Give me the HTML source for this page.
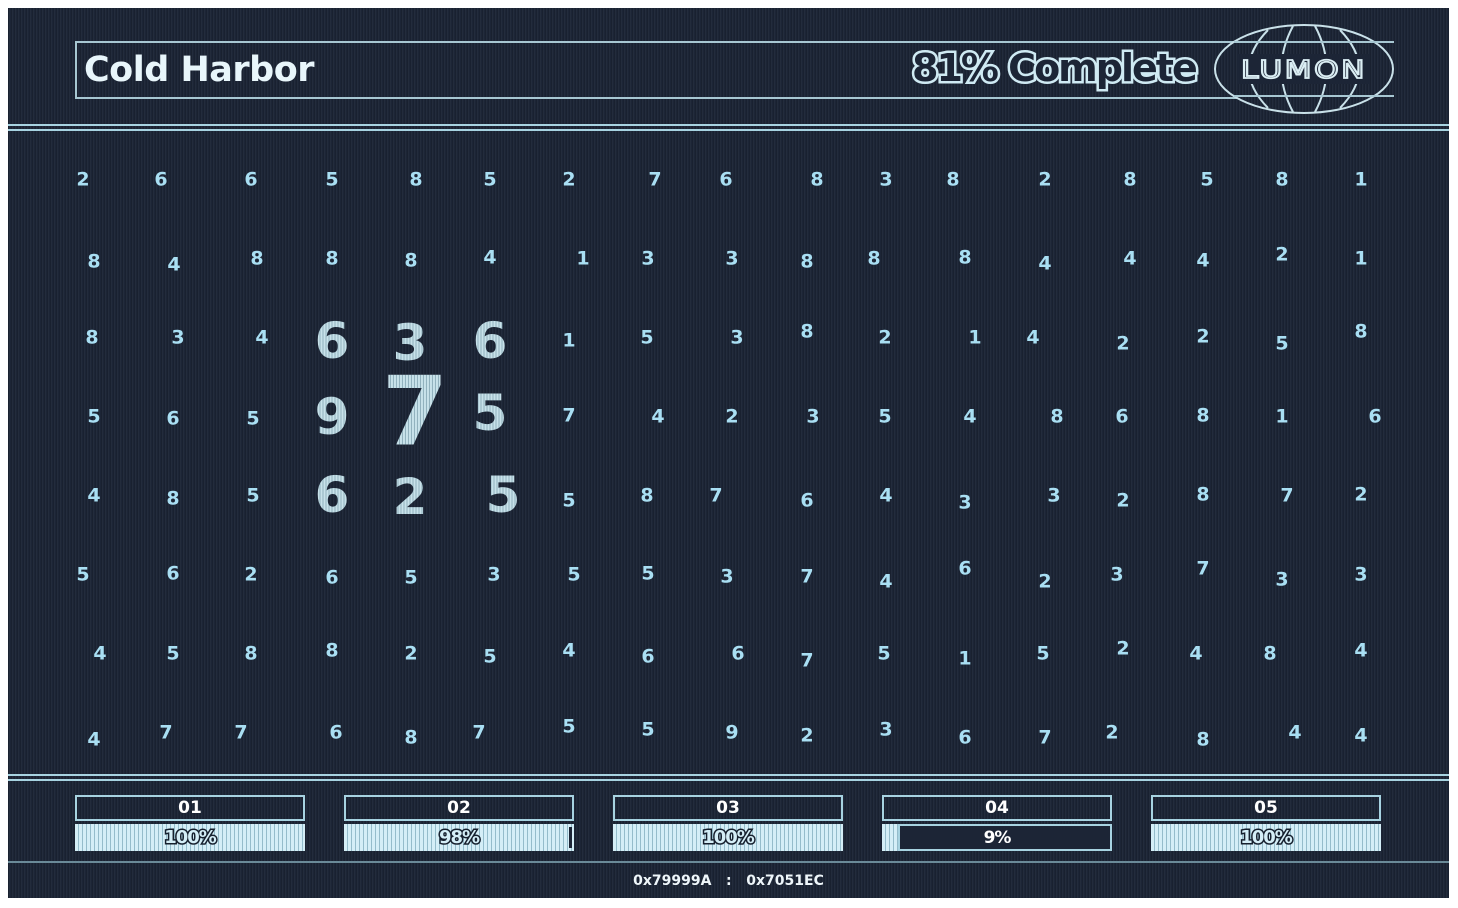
<!DOCTYPE html>
<html><head><meta charset="utf-8"><style>
html,body{margin:0;padding:0;background:#fff;width:1458px;height:908px;overflow:hidden}
#f{position:absolute;left:8px;top:8px;width:1441px;height:890px;background:#1c2536;
background-image:repeating-linear-gradient(90deg,rgba(0,0,0,0.12) 0 1px,rgba(255,255,255,0.03) 1px 2px,transparent 2px 3px);overflow:hidden}
.a{position:absolute}
.n{position:absolute;transform:translate(-50%,-50%);font:bold 19px "DejaVu Sans","Liberation Sans",sans-serif;color:#a9dff3;line-height:1}
.b{position:absolute;transform:translate(-50%,-50%);font:bold 50px "DejaVu Sans","Liberation Sans",sans-serif;color:#bcd9e2;line-height:1;
background:repeating-linear-gradient(90deg,#c8e2ea 0 2px,#8fb0bc 2px 3px);-webkit-background-clip:text;background-clip:text;-webkit-text-fill-color:transparent}
.hl{position:absolute;left:0;width:1441px;height:2px;background:#a7d3e1}
.lab{position:absolute;height:22px;border:2px solid #a7d3e1;text-align:center;font:bold 17px "DejaVu Sans","Liberation Sans",sans-serif;color:#fff;line-height:22px}
.bar{position:absolute;height:27px;background:repeating-linear-gradient(90deg,#d4eef7 0 3px,#94bccb 3px 4px);text-align:center;font:bold 18px "DejaVu Sans","Liberation Sans",sans-serif;line-height:27px;color:#d4eef7;-webkit-text-stroke:3px #16202e;paint-order:stroke fill;letter-spacing:-1px}
</style></head><body><div id="f">
<div class="a" style="left:67px;top:33px;width:1160px;height:54px;border:2px solid #a7c7d2;border-right:none"></div>
<div class="a" style="left:76px;top:42px;font:bold 35px 'DejaVu Sans','Liberation Sans',sans-serif;color:#e8f6fb;letter-spacing:-0.5px">Cold Harbor</div>
<div class="a" style="left:904px;top:38px;font:bold 38px 'DejaVu Sans','Liberation Sans',sans-serif;color:#1c2536;-webkit-text-stroke:5px #cfeaf3;paint-order:stroke fill;letter-spacing:-2px">81% Complete</div>
<svg class="a" style="left:0;top:0" width="1441" height="130">
<g fill="none" stroke="#c9e1e9" stroke-width="2">
<ellipse cx="1296" cy="61" rx="89" ry="44"/>
<path d="M1260 22 Q1222 61 1260 100"/><path d="M1332 22 Q1370 61 1332 100"/>
<path d="M1285 18 Q1262 61 1285 104"/><path d="M1307 18 Q1330 61 1307 104"/>
</g>
<rect x="1226" y="33" width="160" height="2" fill="#a7c7d2"/>
<rect x="1226" y="87" width="160" height="2" fill="#a7c7d2"/>
<rect x="1230" y="46" width="132" height="30" fill="#1c2536"/>
<text x="1296" y="70" text-anchor="middle" font-family="DejaVu Sans,Liberation Sans,sans-serif" font-size="25" fill="#1c2536" stroke="#dbeef4" stroke-width="1.8" letter-spacing="2" textLength="126" lengthAdjust="spacingAndGlyphs">LUMON</text>
</svg>
<div class="hl" style="top:116px"></div><div class="hl" style="top:121px"></div>
<div id="g" class="a" style="left:-8px;top:-8px;width:1458px;height:908px">
<span class="n" style="left:83px;top:180px">2</span><span class="n" style="left:161px;top:180px">6</span><span class="n" style="left:251px;top:180px">6</span><span class="n" style="left:332px;top:180px">5</span><span class="n" style="left:416px;top:180px">8</span><span class="n" style="left:490px;top:180px">5</span><span class="n" style="left:569px;top:180px">2</span><span class="n" style="left:655px;top:180px">7</span><span class="n" style="left:726px;top:180px">6</span><span class="n" style="left:817px;top:180px">8</span><span class="n" style="left:886px;top:180px">3</span><span class="n" style="left:953px;top:180px">8</span><span class="n" style="left:1045px;top:180px">2</span><span class="n" style="left:1130px;top:180px">8</span><span class="n" style="left:1207px;top:180px">5</span><span class="n" style="left:1282px;top:180px">8</span><span class="n" style="left:1361px;top:180px">1</span>
<span class="n" style="left:94px;top:262px">8</span><span class="n" style="left:174px;top:265px">4</span><span class="n" style="left:257px;top:259px">8</span><span class="n" style="left:332px;top:259px">8</span><span class="n" style="left:411px;top:261px">8</span><span class="n" style="left:490px;top:258px">4</span><span class="n" style="left:583px;top:259px">1</span><span class="n" style="left:648px;top:259px">3</span><span class="n" style="left:732px;top:259px">3</span><span class="n" style="left:807px;top:262px">8</span><span class="n" style="left:874px;top:259px">8</span><span class="n" style="left:965px;top:258px">8</span><span class="n" style="left:1045px;top:264px">4</span><span class="n" style="left:1130px;top:259px">4</span><span class="n" style="left:1203px;top:261px">4</span><span class="n" style="left:1282px;top:255px">2</span><span class="n" style="left:1361px;top:259px">1</span>
<span class="n" style="left:92px;top:338px">8</span><span class="n" style="left:178px;top:338px">3</span><span class="n" style="left:262px;top:338px">4</span><span class="b" style="left:332px;top:341px">6</span><span class="b" style="left:410px;top:343px">3</span><span class="b" style="left:490px;top:341px">6</span><span class="n" style="left:569px;top:341px">1</span><span class="n" style="left:647px;top:338px">5</span><span class="n" style="left:737px;top:338px">3</span><span class="n" style="left:807px;top:332px">8</span><span class="n" style="left:885px;top:338px">2</span><span class="n" style="left:975px;top:338px">1</span><span class="n" style="left:1033px;top:338px">4</span><span class="n" style="left:1123px;top:344px">2</span><span class="n" style="left:1203px;top:337px">2</span><span class="n" style="left:1282px;top:344px">5</span><span class="n" style="left:1361px;top:332px">8</span>
<span class="n" style="left:94px;top:417px">5</span><span class="n" style="left:173px;top:419px">6</span><span class="n" style="left:253px;top:419px">5</span><span class="b" style="left:332px;top:417px">9</span><span class="b" style="left:415px;top:413px;font-size:95px">7</span><span class="b" style="left:490px;top:413px">5</span><span class="n" style="left:569px;top:416px">7</span><span class="n" style="left:658px;top:417px">4</span><span class="n" style="left:732px;top:417px">2</span><span class="n" style="left:813px;top:417px">3</span><span class="n" style="left:885px;top:417px">5</span><span class="n" style="left:970px;top:417px">4</span><span class="n" style="left:1057px;top:417px">8</span><span class="n" style="left:1122px;top:417px">6</span><span class="n" style="left:1203px;top:416px">8</span><span class="n" style="left:1282px;top:417px">1</span><span class="n" style="left:1375px;top:417px">6</span>
<span class="n" style="left:94px;top:496px">4</span><span class="n" style="left:173px;top:499px">8</span><span class="n" style="left:253px;top:496px">5</span><span class="b" style="left:332px;top:495px">6</span><span class="b" style="left:410px;top:497px">2</span><span class="b" style="left:503px;top:495px">5</span><span class="n" style="left:569px;top:501px">5</span><span class="n" style="left:647px;top:496px">8</span><span class="n" style="left:716px;top:496px">7</span><span class="n" style="left:807px;top:501px">6</span><span class="n" style="left:886px;top:496px">4</span><span class="n" style="left:965px;top:503px">3</span><span class="n" style="left:1054px;top:496px">3</span><span class="n" style="left:1123px;top:501px">2</span><span class="n" style="left:1203px;top:495px">8</span><span class="n" style="left:1287px;top:496px">7</span><span class="n" style="left:1361px;top:495px">2</span>
<span class="n" style="left:83px;top:575px">5</span><span class="n" style="left:173px;top:574px">6</span><span class="n" style="left:251px;top:575px">2</span><span class="n" style="left:332px;top:578px">6</span><span class="n" style="left:411px;top:578px">5</span><span class="n" style="left:494px;top:575px">3</span><span class="n" style="left:574px;top:575px">5</span><span class="n" style="left:648px;top:574px">5</span><span class="n" style="left:727px;top:577px">3</span><span class="n" style="left:807px;top:577px">7</span><span class="n" style="left:886px;top:582px">4</span><span class="n" style="left:965px;top:569px">6</span><span class="n" style="left:1045px;top:582px">2</span><span class="n" style="left:1117px;top:575px">3</span><span class="n" style="left:1203px;top:569px">7</span><span class="n" style="left:1282px;top:580px">3</span><span class="n" style="left:1361px;top:575px">3</span>
<span class="n" style="left:100px;top:654px">4</span><span class="n" style="left:173px;top:654px">5</span><span class="n" style="left:251px;top:654px">8</span><span class="n" style="left:332px;top:651px">8</span><span class="n" style="left:411px;top:654px">2</span><span class="n" style="left:490px;top:657px">5</span><span class="n" style="left:569px;top:651px">4</span><span class="n" style="left:648px;top:657px">6</span><span class="n" style="left:738px;top:654px">6</span><span class="n" style="left:807px;top:661px">7</span><span class="n" style="left:884px;top:654px">5</span><span class="n" style="left:965px;top:659px">1</span><span class="n" style="left:1043px;top:654px">5</span><span class="n" style="left:1123px;top:649px">2</span><span class="n" style="left:1196px;top:654px">4</span><span class="n" style="left:1270px;top:654px">8</span><span class="n" style="left:1361px;top:651px">4</span>
<span class="n" style="left:94px;top:740px">4</span><span class="n" style="left:166px;top:733px">7</span><span class="n" style="left:241px;top:733px">7</span><span class="n" style="left:336px;top:733px">6</span><span class="n" style="left:411px;top:738px">8</span><span class="n" style="left:479px;top:733px">7</span><span class="n" style="left:569px;top:727px">5</span><span class="n" style="left:648px;top:730px">5</span><span class="n" style="left:732px;top:733px">9</span><span class="n" style="left:807px;top:736px">2</span><span class="n" style="left:886px;top:730px">3</span><span class="n" style="left:965px;top:738px">6</span><span class="n" style="left:1045px;top:738px">7</span><span class="n" style="left:1112px;top:733px">2</span><span class="n" style="left:1203px;top:740px">8</span><span class="n" style="left:1295px;top:733px">4</span><span class="n" style="left:1361px;top:736px">4</span>
</div>
<div class="hl" style="top:766px"></div><div class="hl" style="top:771px"></div>
<div class="lab" style="left:67px;top:787px;width:226px">01</div>
<div class="bar" style="left:67px;top:816px;width:230px">100%</div>
<div class="lab" style="left:336px;top:787px;width:226px">02</div>
<div class="bar" style="left:336px;top:816px;width:230px">98%<div class="a" style="left:225px;top:3px;width:3px;height:21px;background:#1c2536"></div></div>
<div class="lab" style="left:605px;top:787px;width:226px">03</div>
<div class="bar" style="left:605px;top:816px;width:230px">100%</div>
<div class="lab" style="left:874px;top:787px;width:226px">04</div>
<div class="bar" style="left:874px;top:816px;width:230px;color:#fff;-webkit-text-stroke:0"><div class="a" style="left:16px;top:0;width:210px;height:23px;background:#1c2536;border:2px solid #a7d3e1"></div><span style="position:relative;font-size:17px">9%</span></div>
<div class="lab" style="left:1143px;top:787px;width:226px">05</div>
<div class="bar" style="left:1143px;top:816px;width:230px">100%</div>
<div class="a" style="left:0;top:853px;width:1441px;height:2px;background:#6a8a98"></div>
<div class="a" style="left:0;top:865px;width:1441px;text-align:center;font:bold 14px 'DejaVu Sans','Liberation Sans',sans-serif;color:#eef6fa">0x79999A &nbsp; : &nbsp; 0x7051EC</div>
</div></body></html>
